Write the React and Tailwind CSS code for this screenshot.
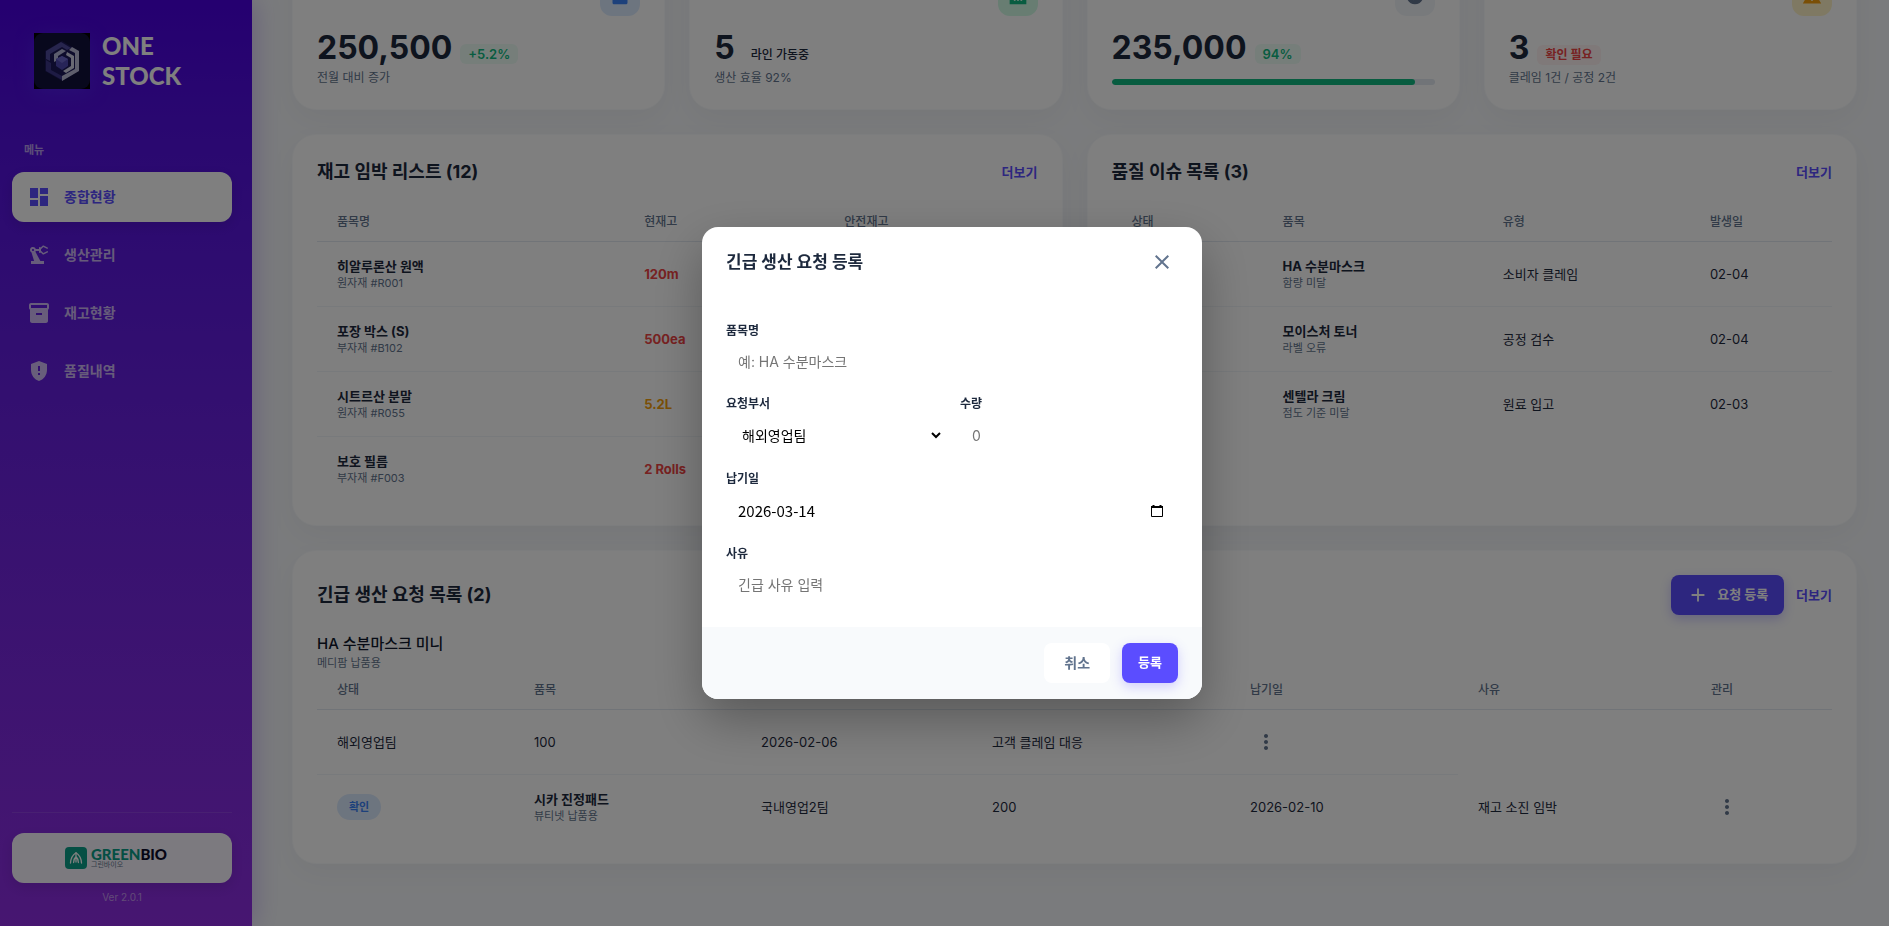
import React, { useState } from 'react';
import {
  MdAdd,
  MdCheckCircle,
  MdClose,
  MdDashboard,
  MdFactory,
  MdGppMaybe,
  MdInventory2,
  MdMoreVert,
  MdPrecisionManufacturing,
  MdWarning,
} from 'react-icons/md';

const menuItems = [
  { label: '종합현황', icon: MdDashboard },
  { label: '생산관리', icon: MdPrecisionManufacturing },
  { label: '재고현황', icon: MdInventory2 },
  { label: '품질내역', icon: MdGppMaybe },
];

const stockRows = [
  { name: '히알루론산 원액', code: '원자재 #R001', stock: '120m', color: 'text-[#ef4444]' },
  { name: '포장 박스 (S)', code: '부자재 #B102', stock: '500ea', color: 'text-[#ef4444]' },
  { name: '시트르산 분말', code: '원자재 #R055', stock: '5.2L', color: 'text-[#f59e0b]' },
  { name: '보호 필름', code: '부자재 #F003', stock: '2 Rolls', color: 'text-[#ef4444]' },
];

const issueRows = [
  { name: 'HA 수분마스크', detail: '함량 미달', type: '소비자 클레임', date: '02-04' },
  { name: '모이스처 토너', detail: '라벨 오류', type: '공정 검수', date: '02-04' },
  { name: '센텔라 크림', detail: '점도 기준 미달', type: '원료 입고', date: '02-03' },
];

const BrandMark = () => (
  <svg viewBox="0 0 56 56" className="h-14 w-14 shrink-0 shadow-[0_4px_20px_rgba(91,77,255,0.3)]" aria-hidden="true">
    <rect width="56" height="56" fill="#000" />
    <rect width="56" height="56" rx="9" fill="#11103a" />
    <path d="M28 8 45 18v20L28 48 11 38V18Z" fill="#1c1958" />
    <path d="M27 9 12 18v8l4 2v-7l12-7 5 3 4-2Z" fill="#4f4a9c" />
    <path d="m12 27 5 3v7l11 6v4L12 38Z" fill="#3d3788" />
    <path d="m20 21 8-5 4 2-8 5v4l-4 2Z" fill="#b9bada" />
    <path d="m28 23 6 3v7l-6 4-6-4v-7Z" fill="#4e48b0" />
    <path d="m28 23 6 3-6 4-6-4Z" fill="#6d68cc" />
    <path d="m33 19 7 4v12l-8 5-3-2 8-5v-8l-5-3Z" fill="#d2d2e6" />
    <path d="m38 14 7 4v20L28 48v-5l13-7V20l-6-3Z" fill="#bdbdd8" />
  </svg>
);

const GreenBioMark = () => (
  <svg viewBox="0 0 22 22" className="h-[22px] w-[22px]" aria-hidden="true">
    <rect width="22" height="22" rx="4" fill="#0a9f88" />
    <g fill="none" stroke="#fff" strokeWidth="1.3" strokeLinecap="round">
      <path d="M5.500 16c.3-4.500 2-8 5.500-10.200C14.500 8 16.200 11.500 16.500 16" />
      <path d="M11 6v9M8.600 15.500c0-2.500.8-4.500 2.400-6 1.600 1.500 2.400 3.500 2.400 6" />
    </g>
  </svg>
);

const Sidebar = () => (
  <aside className="z-10 flex w-[252px] shrink-0 flex-col bg-gradient-to-b from-[#4a00e0] to-[#8e2de2] pl-3 pr-5 shadow-[4px_0_24px_rgba(74,0,224,0.2)]">
    <div className="flex items-center gap-3 pl-[22px] pt-[31px]">
      <BrandMark />
      <h1 className="w-24 font-['Lato'] text-2xl/[30px] font-black text-white">
        ONE STOCK
      </h1>
    </div>

    <p className="mb-3 mt-[49px] pl-3 text-[11px] font-bold leading-5 text-white/60">메뉴</p>
    <nav className="flex flex-col gap-2">
      {menuItems.map((item, idx) => (
        <a
          key={item.label}
          href="#"
          className={`flex h-[50px] items-center gap-[13px] rounded-xl px-[15px] text-sm font-bold ${
            idx === 0 ? 'bg-white text-[#5b4dff] shadow-[0_4px_12px_rgba(0,0,0,0.1)]' : 'text-white/70'
          }`}
        >
          <item.icon className="h-6 w-6" />
          {item.label}
        </a>
      ))}
    </nav>

    <div className="mt-auto border-t border-white/10 pb-[21px] pt-5 text-center">
      <div className="flex h-[50px] items-center justify-center gap-1 rounded-xl bg-white/95 pr-3 shadow-[0_4px_12px_rgba(0,0,0,0.1)]">
        <GreenBioMark />
        <div className="text-left">
          <p className="font-['Lato'] text-[15px] font-black leading-[14px] text-[#0b0b2a]">
            <span className="text-[#0a9f88]">GREEN</span>BIO
          </p>
          <p className="text-[7px] leading-[8px] text-slate-500">그린바이오</p>
        </div>
      </div>
      <p className="mt-[6px] text-[10px] leading-4 text-white/50">Ver 2.0.1</p>
    </div>
  </aside>
);

const StatCard = ({ icon: Icon, iconStyle, value, badge, badgeStyle, note, progress }) => (
  <section className="rounded-3xl border border-slate-50 bg-white p-6 shadow-[0_10px_30px_rgba(0,0,0,0.04)]">
    <div className="mb-3 flex justify-end">
      <span className={`flex h-10 w-10 items-center justify-center rounded-xl ${iconStyle}`}>
        <Icon className="h-5 w-5" />
      </span>
    </div>
    <div className="flex h-10 items-baseline gap-2">
      <strong className="text-[32px] font-bold leading-10 text-slate-800">{value}</strong>
      <span className={`rounded-md px-2 leading-5 ${badgeStyle}`}>{badge}</span>
    </div>
    {note && <p className="mt-[3px] text-xs leading-[14px] text-slate-500">{note}</p>}
    {progress && (
      <div className="mt-[11px] h-[6px] overflow-hidden rounded-full bg-slate-200">
        <div className="h-full rounded-full bg-[#10b981]" style={{ width: `${progress}%` }} />
      </div>
    )}
  </section>
);

const Panel = ({ title, action, children }) => (
  <section className="rounded-3xl border border-slate-50 bg-white p-6 shadow-[0_10px_30px_rgba(0,0,0,0.04)]">
    <div className="mb-4 flex items-center justify-between">
      <h2 className="text-lg font-bold leading-[26px] text-slate-800">{title}</h2>
      <div className="flex items-center gap-3">
        {action}
        <a href="#" className="text-[13px] font-bold leading-5 text-[#5b4dff]">더보기</a>
      </div>
    </div>
    {children}
  </section>
);

const Th = ({ children, className = '' }) => (
  <th className={`border-b border-slate-200 px-5 pb-[11px] pt-[13px] text-left text-xs font-medium leading-4 text-slate-500 ${className}`}>
    {children}
  </th>
);

const Td = ({ children, className = '' }) => (
  <td className={`h-[65px] border-b border-slate-100 px-5 text-[13px] leading-[18px] text-slate-800 group-last:h-16 group-last:border-b-0 ${className}`}>
    {children}
  </td>
);

const ItemName = ({ name, sub }) => (
  <>
    <p className="text-[13px] font-bold leading-[18px]">{name}</p>
    <p className="text-[11px] leading-4 text-slate-500">{sub}</p>
  </>
);

const MoreButton = () => (
  <button type="button" aria-label="관리" className="flex h-8 w-8 items-center justify-center text-slate-500">
    <MdMoreVert className="h-6 w-6" />
  </button>
);

const fieldStyle = 'block w-full bg-transparent px-3 text-black outline-none placeholder:text-[#757575]';
const labelStyle = 'mb-[2px] block text-xs font-bold leading-5 text-slate-800';

const RequestModal = ({ onClose }) => (
  <div className="fixed inset-0 z-50 flex items-center justify-center bg-black/50 pl-[15px]">
    <form
      role="dialog"
      aria-label="긴급 생산 요청 등록"
      className="w-[500px] overflow-hidden rounded-2xl bg-white shadow-[0_20px_50px_rgba(0,0,0,0.3)]"
      onSubmit={(e) => e.preventDefault()}
    >
      <div className="flex h-[70px] items-center justify-between px-6">
        <h2 className="pt-[2px] text-[17px] font-bold text-slate-800">긴급 생산 요청 등록</h2>
        <button type="button" aria-label="닫기" onClick={onClose} className="p-1 text-slate-500">
          <MdClose className="h-6 w-6" />
        </button>
      </div>

      <div className="flex flex-col gap-[14px] p-6">
        <div>
          <label htmlFor="item" className={labelStyle}>품목명</label>
          <input id="item" type="text" placeholder="예: HA 수분마스크" className={`h-[37px] text-sm ${fieldStyle}`} />
        </div>
        <div className="grid grid-cols-2 gap-4">
          <div>
            <label htmlFor="team" className={labelStyle}>요청부서</label>
            <select id="team" className={`h-[39px] text-sm ${fieldStyle}`}>
              <option>해외영업팀</option>
            </select>
          </div>
          <div>
            <label htmlFor="qty" className={labelStyle}>수량</label>
            <input id="qty" type="number" placeholder="0" className={`h-[39px] text-sm ${fieldStyle}`} />
          </div>
        </div>
        <div>
          <label htmlFor="due" className={labelStyle}>납기일</label>
          <div className="flex items-center pr-[14px]">
            <input
              id="due"
              type="text"
              defaultValue="2026-03-14"
              className={`h-[39px] font-['Noto_Sans_CJK_KR',sans-serif] text-[15px] ${fieldStyle}`}
            />
            <button type="button" aria-label="날짜 선택" className="shrink-0">
              <svg viewBox="0 0 14 14" className="h-[14px] w-[14px]" fill="none" stroke="#000">
                <path d="M1.500 3.500h11v9h-11z" />
                <path d="M1 3h12M3.500 1v2M10.500 1v2" strokeWidth="2" />
              </svg>
            </button>
          </div>
        </div>
        <div>
          <label htmlFor="reason" className={labelStyle}>사유</label>
          <input id="reason" type="text" placeholder="긴급 사유 입력" className={`h-[37px] text-sm ${fieldStyle}`} />
        </div>
      </div>

      <div className="flex justify-end gap-3 bg-slate-50 px-6 py-4">
        <button type="button" onClick={onClose} className="h-10 rounded-lg bg-white px-5 text-sm font-bold text-slate-500">
          취소
        </button>
        <button type="submit" className="h-10 rounded-lg bg-[#5b4dff] px-4 text-[13px] font-bold text-white shadow-[0_4px_12px_rgba(91,77,255,0.25)]">
          등록
        </button>
      </div>
    </form>
  </div>
);

const App = () => {
  const [showModal, setShowModal] = useState(true);

  return (
    <div className="flex h-screen overflow-hidden bg-[#f5f7fa] font-['Inter','Noto_Sans_CJK_KR',sans-serif]">
      <Sidebar />

      <main className="flex min-w-0 flex-1 flex-col justify-end gap-6 pb-[62px] pl-10 pr-8">
        {/* Summary cards */}
        <div className="grid grid-cols-4 gap-6">
          <StatCard
            icon={MdInventory2}
            iconStyle="bg-blue-100 text-[#3b82f6]"
            value="250,500"
            badge="+5.2%"
            badgeStyle="bg-emerald-50 text-[13px] font-semibold text-[#10b981]"
            note="전월 대비 증가"
          />
          <StatCard
            icon={MdFactory}
            iconStyle="bg-emerald-100 text-[#10b981]"
            value="5"
            badge="라인 가동중"
            badgeStyle="text-xs font-medium text-slate-800"
            note="생산 효율 92%"
          />
          <StatCard
            icon={MdCheckCircle}
            iconStyle="bg-slate-100 text-slate-500"
            value="235,000"
            badge="94%"
            badgeStyle="bg-emerald-50 text-[13px] font-semibold text-[#10b981]"
            progress={94}
          />
          <StatCard
            icon={MdWarning}
            iconStyle="bg-amber-100 text-[#f59e0b]"
            value="3"
            badge="확인 필요"
            badgeStyle="bg-red-50 text-xs font-semibold text-[#ef4444]"
            note="클레임 1건 / 공정 2건"
          />
        </div>

        <div className="grid grid-cols-2 gap-6">
          <Panel title="재고 임박 리스트 (12)">
            <table className="w-full table-fixed border-separate border-spacing-0">
              <thead>
                <tr>
                  <Th className="w-[307px]">품목명</Th>
                  <Th className="w-[200px]">현재고</Th>
                  <Th className="w-[213px]">안전재고</Th>
                </tr>
              </thead>
              <tbody>
                {stockRows.map((row) => (
                  <tr key={row.name} className="group">
                    <Td><ItemName name={row.name} sub={row.code} /></Td>
                    <Td><span className={`font-bold ${row.color}`}>{row.stock}</span></Td>
                    <Td />
                  </tr>
                ))}
              </tbody>
            </table>
          </Panel>

          <Panel title="품질 이슈 목록 (3)">
            <table className="w-full table-fixed border-separate border-spacing-0">
              <thead>
                <tr>
                  <Th className="w-[151px]">상태</Th>
                  <Th className="w-[220px]">품목</Th>
                  <Th className="w-[207px]">유형</Th>
                  <Th className="w-[142px]">발생일</Th>
                </tr>
              </thead>
              <tbody>
                {issueRows.map((row) => (
                  <tr key={row.name} className="group">
                    <Td />
                    <Td><ItemName name={row.name} sub={row.detail} /></Td>
                    <Td>{row.type}</Td>
                    <Td>{row.date}</Td>
                  </tr>
                ))}
              </tbody>
            </table>
          </Panel>
        </div>

        {/* Urgent production requests */}
        <Panel
          title="긴급 생산 요청 목록 (2)"
          action={
            <button
              type="button"
              onClick={() => setShowModal(true)}
              className="flex h-10 items-center gap-2 rounded-lg bg-[#5b4dff] px-4 text-[13px] font-bold text-white shadow-[0_4px_12px_rgba(91,77,255,0.3)]"
            >
              <MdAdd className="h-[22px] w-[22px]" />
              요청 등록
            </button>
          }
        >
          <p className="text-[15px] font-medium leading-[26px] text-slate-900">HA 수분마스크 미니</p>
          <p className="text-[11px] leading-3 text-slate-500">메디팜 납품용</p>
          <table className="w-full table-fixed border-separate border-spacing-0">
            <thead>
              <tr>
                <Th className="w-[197px]">상태</Th>
                <Th className="w-[227px]">품목</Th>
                <Th className="w-[231px]">요청부서</Th>
                <Th className="w-[258px]">수량</Th>
                <Th className="w-[228px]">납기일</Th>
                <Th className="w-[233px]">사유</Th>
                <Th className="w-[141px]">관리</Th>
              </tr>
            </thead>
            <tbody>
              <tr className="group">
                <Td>해외영업팀</Td>
                <Td>100</Td>
                <Td>2026-02-06</Td>
                <Td>고객 클레임 대응</Td>
                <Td><MoreButton /></Td>
              </tr>
              <tr className="group">
                <Td>
                  <span className="inline-block rounded-full bg-blue-100 px-3 text-[11px] font-bold leading-[26px] text-[#3b82f6]">
                    확인
                  </span>
                </Td>
                <Td><ItemName name="시카 진정패드" sub="뷰티넷 납품용" /></Td>
                <Td>국내영업2팀</Td>
                <Td>200</Td>
                <Td>2026-02-10</Td>
                <Td>재고 소진 임박</Td>
                <Td><MoreButton /></Td>
              </tr>
            </tbody>
          </table>
        </Panel>
      </main>

      {showModal && <RequestModal onClose={() => setShowModal(false)} />}
    </div>
  );
};

export default App;
